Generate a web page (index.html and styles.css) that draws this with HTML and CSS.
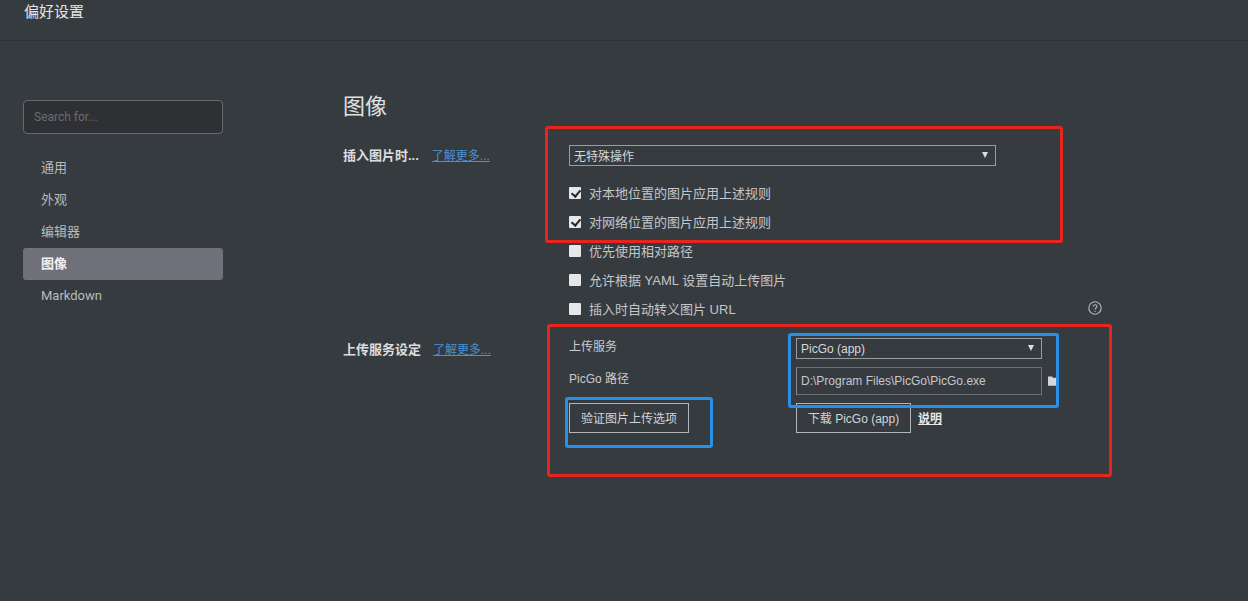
FILE: index.html
```html
<!DOCTYPE html>
<html lang="zh">
<head>
<meta charset="utf-8">
<title>偏好设置</title>
<link rel="stylesheet" href="styles.css">
</head>
<body>
<header class="titlebar">偏好设置</header>
<div class="layout">
  <aside class="sidebar">
    <input class="search" type="text" placeholder="Search for...">
    <nav class="nav">
      <a class="nav-item">通用</a>
      <a class="nav-item">外观</a>
      <a class="nav-item">编辑器</a>
      <a class="nav-item active">图像</a>
      <a class="nav-item">Markdown</a>
    </nav>
  </aside>
  <main class="content">
    <h1 class="heading">图像</h1>
    <section class="section insert">
      <div class="section-label"><b>插入图片时...</b><a class="more">了解更多...</a></div>
      <div class="section-body">
        <div class="select wide"><span>无特殊操作</span><i class="caret"></i></div>
        <div class="checks">
          <label class="check"><input type="checkbox" checked><span>对本地位置的图片应用上述规则</span></label>
          <label class="check"><input type="checkbox" checked><span>对网络位置的图片应用上述规则</span></label>
          <label class="check"><input type="checkbox"><span>优先使用相对路径</span></label>
          <label class="check"><input type="checkbox"><span>允许根据 YAML 设置自动上传图片</span></label>
          <label class="check last"><input type="checkbox"><span>插入时自动转义图片 URL</span>
            <svg class="help" viewBox="0 0 14 14" width="14" height="14"><circle cx="7" cy="7" r="6.2" fill="none" stroke="#b4b7ba" stroke-width="1.100"/><path d="M5.200 5.600c0-1.100.8-1.800 1.900-1.800s1.800.7 1.800 1.600c0 1.200-1.600 1.500-1.800 3" fill="none" stroke="#b4b7ba" stroke-width="1.100"/><circle cx="7" cy="10.300" r=".7" fill="#b4b7ba"/></svg>
          </label>
        </div>
      </div>
    </section>
    <section class="section upload">
      <div class="section-label"><b>上传服务设定</b><a class="more">了解更多...</a></div>
      <div class="upload-grid">
        <div class="field-label service">上传服务</div>
        <div class="select narrow"><span>PicGo (app)</span><i class="caret"></i></div>
        <div class="field-label path">PicGo 路径</div>
        <div class="path-row">
          <div class="path-input">D:\Program Files\PicGo\PicGo.exe</div>
          <svg class="folder" viewBox="0 0 12 10" width="12" height="10"><path d="M0 .5h4l1 1.200h6v8H0z" fill="#d4d6d8"/></svg>
        </div>
        <div><button class="btn verify">验证图片上传选项</button></div>
        <div class="download-row"><button class="btn download">下载 PicGo (app)</button><a class="doc">说明</a></div>
      </div>
    </section>
  </main>
</div>
<div class="mark red mark-a"></div>
<div class="mark red mark-b"></div>
<div class="mark blue mark-c"></div>
<div class="mark blue mark-d"></div>
</body>
</html>
```
FILE: styles.css
```css
* { box-sizing: border-box; }
html, body { height: 100%; }
body {
  margin: 0;
  position: relative;
  overflow: hidden;
  background: #363b40;
  color: #d3d5d7;
  font-family: "Liberation Sans", "Noto Sans CJK SC", sans-serif;
  font-size: 13px;
}
.titlebar {
  height: 41px;
  padding: 2px 0 0 24px;
  border-bottom: 1px solid #2f3338;
  color: #e4e5e6;
  font-size: 15px;
  line-height: 20px;
}
.layout { display: flex; padding: 48px 0 0 23px; }
.sidebar { width: 200px; flex: none; margin-right: 120px; padding-top: 11px; }
.search {
  display: block;
  width: 200px;
  height: 34px;
  padding: 0 10px;
  background: #2f3033;
  border: 1px solid #66696d;
  border-radius: 4px;
  color: #ddd;
  font: 12px Roboto, "Liberation Sans", sans-serif;
  outline: none;
}
.search::placeholder { color: #6a6c6f; opacity: 1; }
.nav { display: flex; flex-direction: column; margin-top: 18px; }
.nav-item {
  height: 32px;
  padding-left: 18px;
  border-radius: 3px;
  color: #b8babd;
  font-family: Roboto, "Noto Sans CJK SC", sans-serif;
  font-size: 13px;
  line-height: 31px;
}
.nav-item.active { background: #6f7079; color: #f2f2f3; font-weight: 700; }
.content { flex: 1; min-width: 0; }
.heading {
  margin: 1px 0 0;
  color: #dfe0e1;
  font-size: 22px;
  font-weight: 400;
  line-height: 34px;
}
.section { display: flex; }
.section-label { width: 226px; flex: none; display: flex; align-items: baseline; }
.section-label b { color: #dcdddf; font-size: 13px; }
.more {
  margin-left: 13px;
  color: #4a90d6;
  font-size: 12px;
  text-decoration: underline;
}
.insert { margin-top: 21px; }
.select {
  display: flex;
  align-items: center;
  justify-content: space-between;
  height: 21px;
  padding: 0 6px 0 4px;
  border: 1px solid #9a9c9e;
  color: #d6d7d9;
  font-size: 12px;
}
.select.wide { width: 427px; }
.select.narrow { width: 246px; }
.caret {
  width: 0;
  height: 0;
  margin-right: 1px;
  margin-top: -1px;
  border-left: 3.500px solid transparent;
  border-right: 3.500px solid transparent;
  border-top: 6px solid #dcdddf;
}
.checks { display: flex; flex-direction: column; margin-top: 12px; }
.check {
  display: flex;
  align-items: center;
  height: 29px;
  color: #c4c6c8;
  font-size: 13px;
}
.check input {
  appearance: none;
  position: relative;
  width: 12px;
  height: 12px;
  margin: 0 8px 0 0;
  background: #e6e7e8;
  border-radius: 1px;
}
.check input:checked::after {
  content: "";
  position: absolute;
  left: 3.500px;
  top: 1px;
  width: 4px;
  height: 7px;
  border: solid #26282a;
  border-width: 0 2px 2px 0;
  transform: rotate(40deg);
}
.check.last { width: 533px; }
.help { margin-left: auto; margin-top: -2px; }
.upload { margin-top: 11px; }
.upload .section-label { padding-top: 5px; }
.upload .more { margin-left: 12px; }
.upload-grid {
  display: grid;
  grid-template-columns: 227px 1fr;
  grid-template-rows: 29px 36px 30px;
  padding-top: 4px;
}
.field-label { color: #c9cbcd; font-size: 12px; line-height: 16px; }
.field-label.service { padding-top: 1px; }
.field-label.path { padding-top: 4px; }
.path-row { display: flex; align-items: center; align-self: start; height: 28px; }
.path-input {
  width: 246px;
  height: 28px;
  padding-left: 4px;
  border: 1px solid #6d7074;
  border-left-color: #85878a;
  color: #c6c8ca;
  font-size: 12px;
  line-height: 26px;
}
.folder { margin-left: 6px; }
.btn {
  height: 30px;
  background: transparent;
  border: 1px solid #b5b6b7;
  color: #d3d5d7;
  font-family: "Liberation Sans", "Noto Sans CJK SC", sans-serif;
  font-size: 12px;
  padding: 0 0 2px;
}
.btn.verify { width: 120px; }
.btn.download { width: 115px; }
.download-row { display: flex; align-items: center; }
.doc {
  margin-left: 7px;
  padding-bottom: 2px;
  color: #e8e9ea;
  font-size: 12px;
  font-weight: 700;
  text-decoration: underline;
}
.mark { position: absolute; border-style: solid; border-width: 3px; border-radius: 3px; pointer-events: none; }
.red { border-color: #e8241f; }
.blue { border-color: #2a8fe6; }
.mark-a { left: 545px; top: 126px; width: 518px; height: 117px; }
.mark-b { left: 547px; top: 324px; width: 565px; height: 153px; }
.mark-c { left: 788px; top: 333px; width: 271px; height: 75px; }
.mark-d { left: 565px; top: 397px; width: 148px; height: 51px; }
```
